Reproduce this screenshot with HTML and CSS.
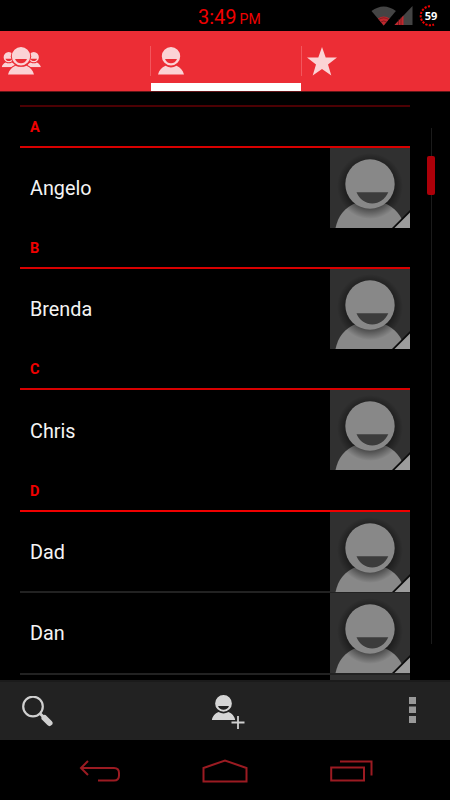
FILE: index.html
```html
<!DOCTYPE html>
<html lang="en">
<head>
<meta charset="utf-8">
<title>Contacts</title>
<link rel="stylesheet" href="styles.css">
</head>
<body>
<svg class="defs" aria-hidden="true">
  <defs>
    <radialGradient id="shade" gradientUnits="userSpaceOnUse" cx="40" cy="38" r="33">
      <stop offset=".65" stop-color="#000" stop-opacity=".5"/>
      <stop offset="1" stop-color="#000" stop-opacity="0"/>
    </radialGradient>
    <symbol id="photo" viewBox="0 0 80 80">
      <rect width="80" height="80" fill="#303030"/>
      <path d="M5.500 80C8 68 15 59 26 55H54C65 59 72 68 75 80Z" fill="#888"/>
      <circle cx="40" cy="38" r="33" fill="url(#shade)"/>
      <circle cx="40" cy="36" r="24.700" fill="#888"/>
      <path d="M26.500 44.300H58.300C55 51.500 49 55.600 42.200 55.600S29.500 51.500 26.500 44.300Z" fill="#3c3c3c"/>
      <path d="M80 62V80H62Z" fill="#0b0b0b"/>
      <path d="M80 64.500V80H64.500Z" fill="#9c9c9c"/>
    </symbol>
    <symbol id="person" viewBox="0 0 26 28">
      <path fill-rule="evenodd" d="M13 0A9.200 9.200 0 1 1 13 18.400A9.200 9.200 0 1 1 13 0ZM7 12C8 14.800 10.200 16.200 13 16.200S18 14.800 19 12Z"/>
      <path d="M0 27.500C1.200 23.500 3.500 20.200 7.500 18.800Q13 22 18.500 18.800C22.500 20.200 24.800 23.500 26 27.500Z"/>
    </symbol>
  </defs>
</svg>
<div class="phone">
  <header class="status">
    <div class="clock">3:49<span>PM</span></div>
    <svg class="signals" width="44" height="20" viewBox="0 0 44 20">
      <path d="M.5 5Q12.700-4 24.900 5L12.700 19.500Z" fill="#444"/>
      <path d="M7 12.500Q12.700 8.300 18.500 12.500L12.700 19.500Z" fill="#c1272d"/>
      <path d="M7.500 13.700Q12.700 10 18 13.700M9.500 16.200Q12.700 13.700 16 16.200" fill="none" stroke="#401012" stroke-width=".5"/>
      <path d="M41.500 0V19H23.500Z" fill="#444"/>
      <path d="M32.500 9.500V19H23.500Z" fill="#c1272d"/>
      <path d="M27.500 13V19M30 11V19" stroke="#401012" stroke-width=".5"/>
    </svg>
    <div class="battery">
      <svg width="22" height="22" viewBox="0 0 22 22"><path d="M11 1.300A9.500 9.500 0 1 0 15 19.500" fill="none" stroke="#f00000" stroke-width="2" stroke-dasharray="2.200 1.300"/></svg>
      <b>59</b>
    </div>
  </header>
  <nav class="tabs">
    <div class="tab"><svg width="42" height="28" viewBox="0 0 42 28" fill="#fbd3d5">
      <svg x="1.500" y="5" width="14.500" height="15.600"><use href="#person"/></svg>
      <svg x="26.500" y="5" width="14.500" height="15.600"><use href="#person"/></svg>
      <path d="M8 28C9.200 23.500 11.500 20.200 15.500 18.800H26.500C30.500 20.200 32.800 23.500 34 28Z" stroke="#ec2d35" stroke-width="2"/>
      <circle cx="21" cy="9.200" r="10.200" fill="#ec2d35"/>
      <svg x="8" width="26" height="28"><use href="#person"/></svg>
    </svg></div>
    <div class="tab active"><svg width="26" height="28" fill="#fbd3d5"><use href="#person"/></svg></div>
    <div class="tab star"><svg width="30" height="29" viewBox="0 0 30 29"><path d="M15 0L18.700 10.500H30L21 17.500L24.300 28.500L15 22L5.700 28.500L9 17.500L0 10.500H11.300Z" fill="#fbd3d5"/></svg></div>
  </nav>
  <main class="body">
    <div class="list">
      <section><h2>A</h2><div class="row"><span>Angelo</span><svg><use href="#photo"/></svg></div></section>
      <section><h2>B</h2><div class="row"><span>Brenda</span><svg><use href="#photo"/></svg></div></section>
      <section><h2>C</h2><div class="row"><span>Chris</span><svg><use href="#photo"/></svg></div></section>
      <section><h2>D</h2>
        <div class="row"><span>Dad</span><svg><use href="#photo"/></svg></div>
        <div class="row"><span>Dan</span><svg><use href="#photo"/></svg></div>
        <div class="row"><span></span><svg><use href="#photo"/></svg></div>
      </section>
    </div>
    <div class="scroll"><div class="thumb"></div></div>
  </main>
  <footer class="actions">
    <svg width="32" height="32" viewBox="0 0 32 32"><circle cx="11" cy="10.500" r="9.800" fill="none" stroke="#d0d0d0" stroke-width="2.200"/><path d="M18 17.500L22 21.500" stroke="#d0d0d0" stroke-width="3"/><path d="M22.500 22L27.500 27" stroke="#d0d0d0" stroke-width="6" stroke-linecap="round"/></svg>
    <svg class="add" width="34" height="36" viewBox="0 0 34 36"><svg x="0.500" y="1" width="24" height="25.500" fill="#d5d5d5"><use href="#person"/></svg><path d="M27 22V35M20.500 28.500H33.500" stroke="#222" stroke-width="4"/><path d="M27 22V35M20.500 28.500H33.500" stroke="#d0d0d0" stroke-width="1.800"/></svg>
    <svg width="8" height="28" viewBox="0 0 8 28" fill="#999"><path d="M1 1H8V8H1ZM1 10.500H8V17H1ZM1 20H8V27H1Z"/></svg>
  </footer>
  <footer class="nav">
    <svg width="42" height="24" viewBox="0 0 42 24"><path d="M9 2L2 9L9 16M2 9H35Q40 9 40 14V16.500Q40 21.500 35 21.500H19" /></svg>
    <svg width="46" height="26" viewBox="0 0 46 26"><path d="M1.500 23.500V10L23 2.500L44.500 10V23.500Z"/></svg>
    <svg width="44" height="24" viewBox="0 0 44 24"><path d="M1.200 8.500H34V21.500H1.200ZM10 2.500H41.500V16.500"/></svg>
  </footer>
</div>
</body>
</html>
```

FILE: styles.css
```css
* { box-sizing: border-box; }
body { margin: 0; background: #000; font-family: Roboto, "Liberation Sans", sans-serif; }
svg { display: block; flex: none; }
.defs { position: absolute; width: 0; height: 0; }
.phone { width: 450px; height: 800px; display: flex; flex-direction: column; background: #000; overflow: hidden; }
.status { height: 31px; display: flex; justify-content: flex-end; align-items: center; padding-right: 9px; }
.clock { width: 173px; color: #f00000; font-size: 20px; line-height: 31px; padding-top: 5px; }
.clock span { font-size: 14px; margin-left: 3px; }
.signals { margin: 0 4px 0 0; }
.battery { display: grid; width: 22px; height: 22px; place-items: center; }
.battery > * { grid-area: 1 / 1; }
.battery b { color: #fff; font: bold 11px "Open Sans", sans-serif; padding-left: 2px; }
.tabs { height: 61px; display: flex; background: #ec2d35; border-bottom: 1px solid #611518; }
.tab { width: 150px; padding: 16px 0 0; }
.tab.active { width: 151px; padding-left: 8px; background: linear-gradient(#fff, #fff) 1px 52px / 150px 8px no-repeat, linear-gradient(#f3565d, #f3565d) 0 15px / 1px 30px no-repeat; }
.tab.star { width: 149px; padding-left: 5.5px; background: linear-gradient(#f3565d, #f3565d) 0 15px / 1px 30px no-repeat; }
.body { flex: 1; min-height: 0; display: flex; overflow: hidden; }
.list { width: 390px; margin: 13px 0 0 20px; border-top: 2px solid #4c0003; flex: none; }
h2 { height: 41px; margin: 0; padding-left: 10px; border-bottom: 2px solid #d90000; color: #f00000; font-size: 14.5px; line-height: 42px; font-weight: 700; }
section:first-child h2 { line-height: 41px; }
section:last-child h2 { border-color: #f00000; height: 42px; line-height: 43px; }
.row { height: 80px; display: flex; justify-content: space-between; color: #f4f4f4; font-size: 19.8px; line-height: 82px; padding-left: 10px; }
section:nth-child(3) .row { line-height: 83px; }
section:last-child .row:nth-child(2) { height: 79px; }
.row + .row { height: 82px; background: linear-gradient(#222, #222) 0 0 / 100% 2px no-repeat; padding-top: 2px; }
.row svg { width: 80px; height: 80px; }
.scroll { width: 8px; height: 516px; margin: 36px 0 0 17px; padding-top: 28px; background: linear-gradient(#1b1b1b, #1b1b1b) 4px 0 / 1px 100% no-repeat; }
.thumb { width: 8px; height: 39px; border-radius: 2px; background: #ac0009; }
.actions { height: 60px; flex: none; display: flex; justify-content: space-between; padding: 14px 34px 0 22px; background: #222; border-top: 2px solid #1b1b1b; }
.actions .add { margin-left: -7px; margin-top: -2px; }
.nav { height: 60px; flex: none; display: flex; padding: 18px 0 0 79px; }
.nav svg { fill: none; stroke: #9b1b22; stroke-width: 2; }
.nav svg:nth-child(1) { margin-top: 1px; }
.nav svg:nth-child(2) { margin-left: 81px; }
.nav svg:nth-child(3) { margin-left: 82px; margin-top: 1px; }
```
